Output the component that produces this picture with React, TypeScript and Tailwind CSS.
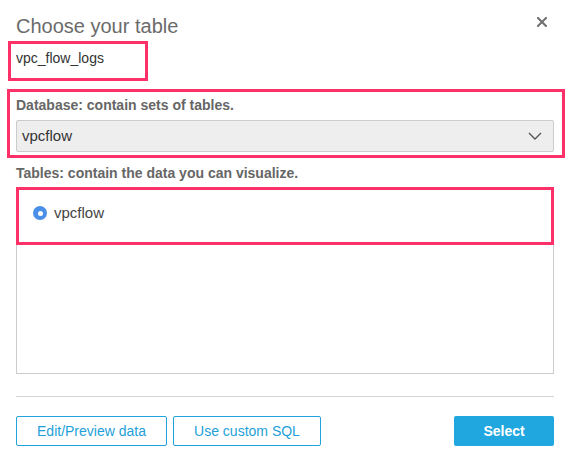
export default function App() {
  return (
    <div className="w-[570px] h-[456px] bg-white pt-[14px] font-['Liberation_Sans',Arial,sans-serif]">
      {/* header */}
      <div className="flex items-start pl-4 pr-[23px]">
        <h2 className="text-[20px] leading-6 text-[#6b6b6b]">Choose your table</h2>
        <button className="ml-auto mt-[3px] text-[#6f6f6f]" aria-label="Close">
          <svg width="10" height="10" viewBox="0 0 10 10" fill="none">
            <path d="M1 1L9 9M9 1L1 9" stroke="currentColor" strokeWidth="2" strokeLinecap="square" />
          </svg>
        </button>
      </div>

      {/* data source name */}
      <div className="ml-[8px] mt-[3px] w-[140px] h-[40px] border-[3px] border-[#fd3068] pl-[5px] pt-[4px] text-[14px] leading-5 text-[#333]">
        vpc_flow_logs
      </div>

      {/* database */}
      <div className="ml-[7px] mt-[8px] w-[558px] border-[3px] border-[#fd3068] pl-[6px] pr-[8px] py-[3px]">
        <div className="text-[14px] leading-5 font-bold text-[#666]">Database: contain sets of tables.</div>
        <div className="mt-[5px] h-[32px] flex items-center rounded-[2px] border border-[#cccccc] bg-[#eeeeee] pl-[5px] pr-[11px]">
          <span className="text-[15px] text-[#333]">vpcflow</span>
          <svg className="ml-auto" width="14" height="8" viewBox="0 0 14 8" fill="none">
            <path d="M1 1L7 7L13 1" stroke="#555" strokeWidth="1.4" />
          </svg>
        </div>
      </div>

      {/* tables */}
      <div className="mt-[5px] px-4 text-[14px] leading-5 font-bold text-[#666]">
        Tables: contain the data you can visualize.
      </div>
      <div className="mx-4 mt-1 h-[187px] border border-[#cccccc]">
        <div className="-mx-px -mt-px h-[58px] border-[3px] border-[#fd3068] flex items-start pl-[14px] pt-[13px]">
          <div className="mt-[3px] w-[14px] h-[14px] rounded-full bg-[#4a8fe7] flex items-center justify-center">
            <div className="w-[5px] h-[5px] rounded-full bg-white" />
          </div>
          <span className="ml-[7px] text-[15px] leading-5 text-[#444]">vpcflow</span>
        </div>
      </div>

      <div className="mx-4 mt-[22px] h-px bg-[#d4d4d4]" />

      {/* actions */}
      <div className="mx-4 mt-[19px] flex gap-[6px]">
        <button className="w-[151px] h-[30px] rounded-[2px] border border-[#22a3dc] text-[14px] text-[#1e9fd8]">
          Edit/Preview data
        </button>
        <button className="w-[148px] h-[30px] rounded-[2px] border border-[#22a3dc] text-[14px] text-[#1e9fd8]">
          Use custom SQL
        </button>
        <button className="ml-auto w-[100px] h-[30px] rounded-[2px] bg-[#20a7e0] text-[14px] font-bold text-white">
          Select
        </button>
      </div>
    </div>
  )
}
